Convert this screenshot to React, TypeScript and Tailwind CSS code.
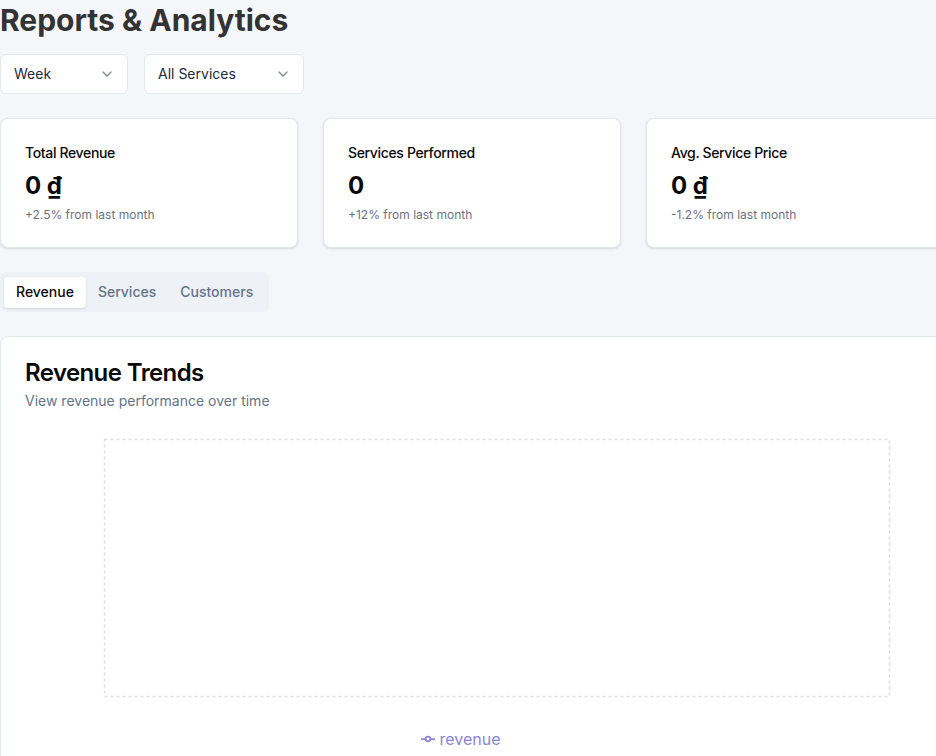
import { ChevronDown } from "lucide-react";

const STATS = [
  { title: "Total Revenue", value: "0 ₫", change: "+2.5% from last month" },
  { title: "Services Performed", value: "0", change: "+12% from last month" },
  { title: "Avg. Service Price", value: "0 ₫", change: "-1.2% from last month" },
];

function Select({ label, width }: { label: string; width: string }) {
  return (
    <div
      className={`${width} h-10 flex items-center justify-between rounded-md border border-[#e2e8f0] bg-white pl-[13px] pr-3 text-sm text-[#1e293b]`}
    >
      <span>{label}</span>
      <ChevronDown size={16} className="text-[#0f172a] opacity-50" />
    </div>
  );
}

export default function App() {
  return (
    <div className="w-full min-h-screen overflow-hidden bg-[#f5f6fa] font-[Inter,sans-serif]">
      <div className="w-[944px]">
        {/* Header */}
        <h1 className="pt-[2px] text-[30px] leading-[36px] font-bold text-[#333333]">Reports &amp; Analytics</h1>

        {/* Filters */}
        <div className="flex gap-4 mt-4">
          <Select label="Week" width="w-[128px]" />
          <Select label="All Services" width="w-[160px]" />
        </div>

        {/* Stat cards */}
        <div className="grid grid-cols-3 gap-[25px] mt-6">
          {STATS.map((s) => (
            <div
              key={s.title}
              className="rounded-lg border border-[#e2e8f0] bg-white p-6 shadow-sm"
            >
              <div className="text-sm leading-5 font-medium tracking-tight text-[#0a0a0a]">{s.title}</div>
              <div className="mt-[7px] text-2xl leading-8 font-bold text-[#0a0a0a]">{s.value}</div>
              <div className="mt-[5px] text-xs leading-4 text-[#6b7280]">{s.change}</div>
            </div>
          ))}
        </div>

        {/* Tabs */}
        <div className="mt-6 inline-flex h-10 items-center rounded-md bg-[#eef1f5] p-1 text-sm font-medium">
          <div className="h-[31px] flex items-center rounded-sm bg-white px-3 text-[#0a0a0a] shadow-sm">Revenue</div>
          <div className="h-[31px] flex items-center px-3 text-[#64748b]">Services</div>
          <div className="h-[31px] flex items-center px-3 text-[#64748b]">Customers</div>
        </div>

        {/* Chart card */}
        <div className="mt-6 rounded-lg border border-[#e2e8f0] bg-white">
          <div className="flex flex-col gap-1.5 p-6">
            <h2 className="text-2xl leading-none font-semibold tracking-tight text-[#0a0a0a]">Revenue Trends</h2>
            <p className="text-sm text-[#64748b]">View revenue performance over time</p>
          </div>
          <div className="px-6 pb-6">
            <svg width="894" height="330" className="block">
              <rect
                x="79.5"
                y="4.5"
                width="785"
                height="257"
                fill="none"
                stroke="#dddddd"
                strokeWidth="1.5"
                strokeDasharray="3 3"
              />
            </svg>
            <div className="-mt-[38px] flex items-center justify-center gap-1 pr-[22px] text-base text-[#8884d8]">
              <svg width="14" height="14" viewBox="0 0 32 32">
                <path
                  strokeWidth="4"
                  fill="none"
                  stroke="#8884d8"
                  d="M0,16h10.667A5.333,5.333,0,1,1,21.333,16H32M21.333,16A5.333,5.333,0,1,1,10.667,16"
                />
              </svg>
              <span>revenue</span>
            </div>
          </div>
        </div>
      </div>
    </div>
  );
}
